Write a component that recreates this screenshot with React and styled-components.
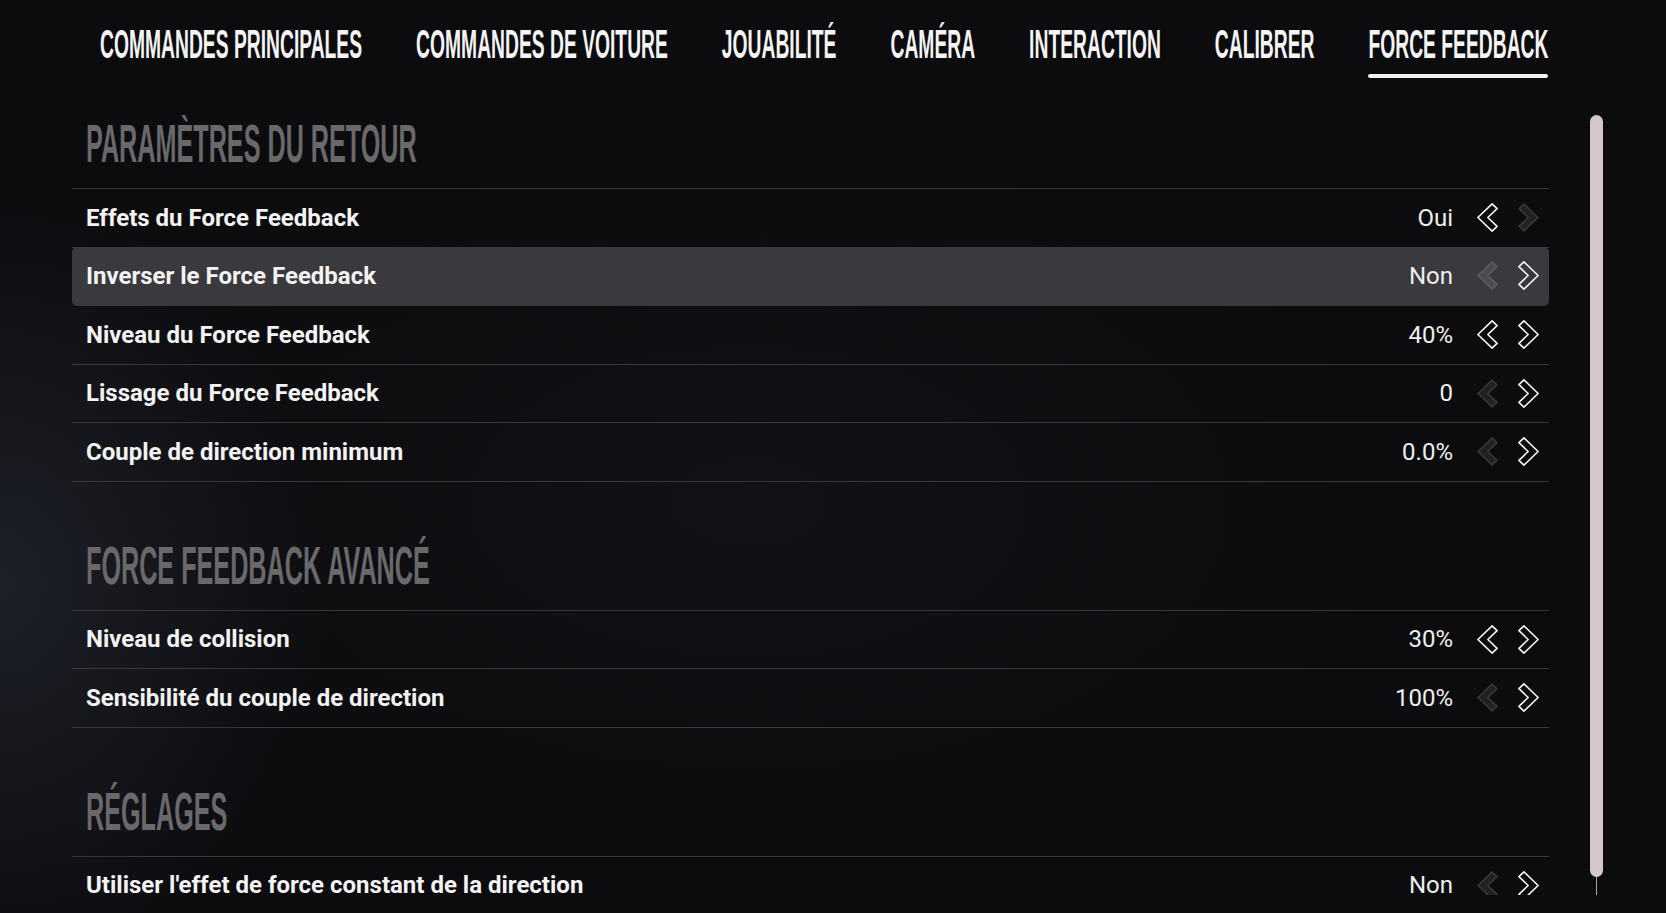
import styled, { createGlobalStyle } from "styled-components";

const tabs = [
  "COMMANDES PRINCIPALES",
  "COMMANDES DE VOITURE",
  "JOUABILITÉ",
  "CAMÉRA",
  "INTERACTION",
  "CALIBRER",
  "FORCE FEEDBACK",
];

const sections = [
  {
    title: "PARAMÈTRES DU RETOUR",
    rows: [
      { label: "Effets du Force Feedback", value: "Oui", prev: true, next: false },
      { label: "Inverser le Force Feedback", value: "Non", prev: false, next: true, selected: true },
      { label: "Niveau du Force Feedback", value: "40%", prev: true, next: true },
      { label: "Lissage du Force Feedback", value: "0", prev: false, next: true },
      { label: "Couple de direction minimum", value: "0.0%", prev: false, next: true },
    ],
  },
  {
    title: "FORCE FEEDBACK AVANCÉ",
    rows: [
      { label: "Niveau de collision", value: "30%", prev: true, next: true },
      { label: "Sensibilité du couple de direction", value: "100%", prev: false, next: true },
    ],
  },
  {
    title: "RÉGLAGES",
    rows: [
      { label: "Utiliser l'effet de force constant de la direction", value: "Non", prev: false, next: true },
    ],
  },
];

export default function App() {
  return (
    <>
      <GlobalStyle />
      <Page>
        <TabBar>
          {tabs.map((t, i) => (
            <Tab key={t}>
              <TabLabel>{t}</TabLabel>
              <Underline $active={i === tabs.length - 1} />
            </Tab>
          ))}
        </TabBar>
        <Main>
          <ScrollArea>
            {sections.map((s) => (
              <Section key={s.title}>
                <Heading>
                  <HeadingText>{s.title}</HeadingText>
                </Heading>
                {s.rows.map((r) => (
                  <Row key={r.label} $selected={r.selected}>
                    <Label>{r.label}</Label>
                    <Value>{r.value}</Value>
                    <Arrows>
                      <Chevron off={!r.prev} />
                      <Chevron right off={!r.next} />
                    </Arrows>
                  </Row>
                ))}
              </Section>
            ))}
          </ScrollArea>
          <Track>
            <Thumb style={{ height: "97.7%" }} />
          </Track>
        </Main>
      </Page>
    </>
  );
}

const Chevron = ({ right, off }) => (
  <ChevronSvg
    viewBox="0 1.6 17.9 25.8"
    preserveAspectRatio="none"
    $right={right}
    $off={off}
  >
    <polygon
      vectorEffect="non-scaling-stroke"
      points="12.88,2.38 0.76,14.5 12.88,26.62 17.12,22.38 9.24,14.5 17.12,6.62"
    />
  </ChevronSvg>
);

const GlobalStyle = createGlobalStyle`
  html, body {
    margin: 0;
    padding: 0;
    background: #0c0b0e;
    overflow: hidden;
  }
`;

const Page = styled.div`
  width: 1666px;
  height: 913px;
  display: flex;
  flex-direction: column;
  overflow: hidden;
  background:
    radial-gradient(ellipse 460px 560px at 0% 64%, rgba(44, 50, 62, 0.55), transparent 72%),
    radial-gradient(ellipse 900px 500px at 45% 55%, rgba(30, 30, 36, 0.35), transparent 70%),
    #0c0b0e;
`;

const TabBar = styled.div`
  display: flex;
  gap: 54px;
  padding: 34px 0 0 100px;
`;

const Tab = styled.div`
  display: flex;
  flex-direction: column;
`;

const TabLabel = styled.span`
  display: block;
  font: 700 19.3px/24px "Liberation Sans", Arial, sans-serif;
  color: #f4f4f4;
  white-space: nowrap;
  transform: scaleY(2.06);
`;

const Underline = styled.div`
  height: 4px;
  margin-top: 16px;
  border-radius: 2px;
  background: ${(p) => (p.$active ? "#f0f0f0" : "transparent")};
`;

const Main = styled.div`
  display: flex;
  height: 780px;
  margin-top: 37px;
  padding-left: 72px;
`;

const ScrollArea = styled.div`
  flex: 0 0 1477px;
  overflow: hidden;
`;

const Section = styled.section`
  & + & {
    margin-top: 55px;
  }
`;

const Heading = styled.h2`
  margin: 0;
  padding: 8px 0 25px 14px;
  font: 700 25.2px/40px "Liberation Sans", Arial, sans-serif;
  color: #69696b;
  border-bottom: 1px solid #38373b;
`;

const HeadingText = styled.span`
  display: inline-block;
  transform: scaleY(2.12);
`;

const Row = styled.div`
  display: flex;
  align-items: center;
  box-sizing: border-box;
  height: ${(p) => (p.$selected ? "59.5px" : "58.5px")};
  margin-top: ${(p) => (p.$selected ? "-1px" : "0")};
  padding: 0 10px 0 14px;
  border-bottom: 1px solid ${(p) => (p.$selected ? "transparent" : "#38373b")};
  border-radius: ${(p) => (p.$selected ? "5px" : "0")};
  background: ${(p) => (p.$selected ? "#3a393d" : "transparent")};
`;

const Label = styled.span`
  flex: 1;
  font: 700 24px Roboto, "Liberation Sans", sans-serif;
  color: #f3f3f3;
`;

const Value = styled.span`
  margin-right: 24px;
  font: 400 24px Roboto, "Liberation Sans", sans-serif;
  color: #eeeeee;
`;

const Arrows = styled.div`
  display: flex;
  gap: 20px;
`;

const ChevronSvg = styled.svg`
  display: block;
  width: 21px;
  height: 29px;
  transform: ${(p) => (p.$right ? "scaleX(-1)" : "none")};

  polygon {
    stroke-width: 1.6;
    stroke-linejoin: round;
    stroke: ${(p) => (p.$off ? "rgba(255,255,255,0.14)" : "#f5f5f5")};
    fill: ${(p) => (p.$off ? "rgba(255,255,255,0.09)" : "none")};
  }
`;

const Track = styled.div`
  flex: 0 0 13px;
  margin-left: 41px;
  display: flex;
  flex-direction: column;
  background: linear-gradient(
    to right,
    transparent 6px,
    #a9a1a3 6px,
    #a9a1a3 7px,
    transparent 7px
  );
`;

const Thumb = styled.div`
  width: 13px;
  border-radius: 7px;
  background: #d5c6c9;
`;
